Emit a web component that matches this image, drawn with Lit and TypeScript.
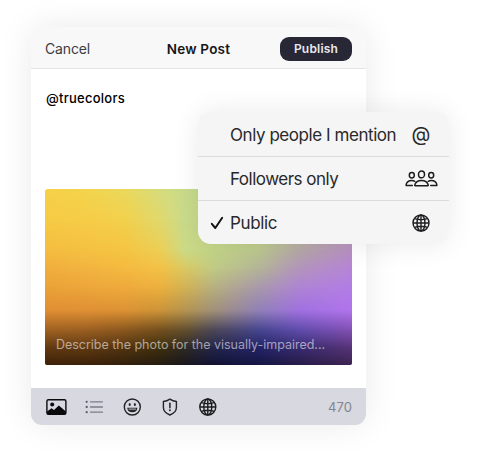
import { LitElement, html, css, svg } from "lit";
import { customElement } from "lit/decorators.js";
import { styleMap } from "lit/directives/style-map.js";

// Colour mesh of the attached photo: column stops in %, then one colour row per height.
const COLS = [0, 13, 26, 37.5, 45.6, 55, 70, 83, 100];
const MESH: [number, string][] = [
  [0, "f6d148 f3d44c ebd95c d6dc7c c9dc8c c4d88a c0d68a c0d08c c0c890"],
  [18, "f6ca44 f6cc46 f2d04c e0d86c cadb8c c5d98a c2d488 bcc090 b8a8b0"],
  [35, "f4bc40 f5c042 f5c442 ecce54 ccda86 c4d688 bcc890 b6a8a8 b890c4"],
  [45, "f0ae3c f2b440 f4ba40 f3c146 dac962 c0ca86 b4b498 b294bc b684d8"],
  [56, "eaa238 eca63a eeaa3c ecb03e d2b254 b6b080 a898ac ae84d4 b27ce6"],
  [69, "e08e32 e09034 dc9234 cc9438 b49450 a09078 9080b8 a070e0 b074ec"],
  [80, "a06222 9c6022 8c581e 74501e 64502e 4c4858 484690 604cac 8450b4"],
  [90, "623a12 603a12 523412 40300e 2e2a24 24264c 242468 382c70 583478"],
  [100, "3e2208 3c220a 32200c 241c10 1a181e 121234 161644 281c48 3c2450"],
];

const ink = "#1d1d20";

const globe = svg`<g fill="none" stroke="${ink}" stroke-width="1.4">
  <circle cx="9" cy="9" r="8"/><ellipse cx="9" cy="9" rx="4" ry="8"/>
  <path d="M9 1v16M1 9h16M2.6 4.7q6.4 2.1 12.8 0M2.6 13.3q6.4-2.1 12.8 0"/></g>`;

const people = svg`<g fill="none" stroke="${ink}" stroke-width="1.5" stroke-linejoin="round" stroke-linecap="round">
  <ellipse cx="16.5" cy="4.4" rx="3" ry="3.4"/>
  <path d="M10.2 15.7q-.6 0-.4-.8c.7-2.7 3.3-4.4 6.7-4.4s6 1.7 6.7 4.4q.2.8-.4.8z"/>
  <ellipse cx="6.8" cy="5.2" rx="2.5" ry="2.7"/><ellipse cx="26.2" cy="5.2" rx="2.5" ry="2.7"/>
  <path d="M7.3 15.5H1.6q-.7 0-.5-.8c.5-2.3 2.7-4.1 5.7-4.1q1.7 0 3 .7M25.7 15.5h5.7q.7 0 .5-.8c-.5-2.3-2.7-4.1-5.7-4.1q-1.7 0-3 .7"/></g>`;

@customElement("photo-card")
export class PhotoCard extends LitElement {
  static styles = css`
    :host { display: grid; height: 176px; border-radius: 3px; overflow: hidden; }
    .band, .caption { grid-area: 1 / 1; }
    .caption {
      z-index: 1; align-self: end; padding: 0 0 10px 11px; line-height: 20px;
      font-size: 12.5px; letter-spacing: -0.02px; color: rgba(255, 255, 255, 0.56); white-space: nowrap;
    }
  `;
  render() {
    return html`${MESH.map(([y, row], i) => {
      const stops = row.split(" ").map((c, k) => `#${c} ${COLS[k]}%`).join(",");
      const mask = i ? `linear-gradient(transparent ${MESH[i - 1][0]}%, #000 ${y}%)` : "none";
      return html`<div class="band" style=${styleMap({ background: `linear-gradient(90deg,${stops})`, maskImage: mask })}></div>`;
    })}<div class="caption">Describe the photo for the visually-impaired...</div>`;
  }
}

@customElement("audience-menu")
export class AudienceMenu extends LitElement {
  static styles = css`
    :host {
      display: block; width: 251px; border-radius: 13px; overflow: hidden; background: #f5f5f5;
      box-shadow: 0 0 28px rgba(0, 0, 0, 0.085); color: #29292b; font-size: 17px;
    }
    .row { display: grid; grid-template-columns: 32px minmax(0, 1fr) 56px; align-items: center; height: 43px; border-bottom: 1px solid #dcdcdd; }
    .row:first-child { height: 44px; }
    .row:last-child { border-bottom: 0; height: 43px; }
    .check { justify-self: end; margin-right: 6px; }
    .icon { justify-self: center; }
    .at { font-size: 19.5px; line-height: 22px; }
    .label { white-space: nowrap; padding-top: 1px; }
    .l0 { letter-spacing: -0.44px; }
    .l1 { letter-spacing: -0.5px; }
    .l2 { letter-spacing: -0.35px; }
    svg { display: block; }
  `;
  render() {
    return html`
      <div class="row"><span></span><span class="label l0">Only people I mention</span><span class="icon at">@</span></div>
      <div class="row"><span></span><span class="label l1">Followers only</span>
        <svg class="icon" width="33" height="17" viewBox="0 0 33 17">${people}</svg></div>
      <div class="row">
        <svg class="check" width="14" height="14" viewBox="0 0 14 14"><path d="M1.8 7.8 5.3 12 12.2 1.8" fill="none" stroke="#151517" stroke-width="2" stroke-linecap="round" stroke-linejoin="round"/></svg>
        <span class="label l2">Public</span>
        <svg class="icon" width="18" height="18" viewBox="0 0 18 18">${globe}</svg></div>`;
  }
}

@customElement("app-root")
export class AppRoot extends LitElement {
  static styles = css`
    :host {
      display: block; position: relative; width: 480px; height: 460px; box-sizing: border-box; padding: 27px 0 0 31px;
      background: #fff; overflow: hidden; font-family: Inter, "Liberation Sans", sans-serif;
    }
    .card {
      display: flex; flex-direction: column; width: 335px; height: 398px; background: #fff;
      border-radius: 11px; overflow: hidden; box-shadow: 0 0 34px rgba(0, 0, 0, 0.085);
    }
    header {
      display: grid; grid-template-columns: 1fr auto 1fr; align-items: center; height: 39px; padding: 2px 14px 0;
      background: #f8f8f8; border-bottom: 1px solid #e6e6e6; font-size: 14px;
    }
    .cancel { color: #3d3d3f; letter-spacing: -0.15px; }
    .title { font-weight: 600; color: #161618; font-size: 13.5px; letter-spacing: 0.2px; }
    .publish {
      justify-self: end; width: 72px; height: 24px; border-radius: 9px; background: #282735; color: #e8e8ec;
      font-weight: 600; font-size: 12px; line-height: 24px; text-align: center; letter-spacing: 0.2px;
    }
    .body { flex: 1; padding: 18px 14px 0; }
    .text { height: 102px; padding-left: 1px; font-size: 13px; line-height: 22px; font-weight: 500; color: #000; letter-spacing: 0.25px; }
    footer {
      display: flex; align-items: center; height: 37px; padding: 0 14px; background: #d7d8e0;
    }
    .tools { display: flex; align-items: center; flex: 1; }
    .tool { width: 38px; display: flex; }
    .count { color: #85858f; font-size: 13px; letter-spacing: 0.1px; }
    .menu { position: absolute; left: 198px; top: 112px; }
  `;
  render() {
    return html`
      <div class="card">
        <header><span class="cancel">Cancel</span><span class="title">New Post</span><span class="publish">Publish</span></header>
        <div class="body"><div class="text">@truecolors</div><photo-card></photo-card></div>
        <footer>
          <div class="tools">
            <span class="tool"><svg width="22" height="18" viewBox="0 0 22 18">
              <rect x="1.9" y="1.7" width="19" height="14.6" rx="1.6" fill="none" stroke="#0a0a0c" stroke-width="1.4"/>
              <circle cx="7.2" cy="6.6" r="2" fill="#0a0a0c"/>
              <path d="M2 16.3v-2.8l4.5-3.2 2.5 1.8 4.8-4.6 7.1 6v2.8z" fill="#0a0a0c"/></svg></span>
            <span class="tool"><svg width="22" height="18" viewBox="0 0 22 18"><g stroke="#7c7c86" stroke-width="1.3" stroke-linecap="round">
              <path d="M7.5 3.8h12M7.5 9h12M7.5 14.2h12"/></g>
              <g fill="#5f5f68"><circle cx="3.7" cy="3.8" r="1.15"/><circle cx="3.7" cy="9" r="1.15"/><circle cx="3.7" cy="14.2" r="1.15"/></g></svg></span>
            <span class="tool"><svg width="22" height="18" viewBox="0 0 22 18">
              <circle cx="11.3" cy="9" r="8" fill="none" stroke="#242428" stroke-width="1.4"/>
              <ellipse cx="8.7" cy="6.5" rx="1" ry="1.5" fill="#242428"/><ellipse cx="13.9" cy="6.5" rx="1" ry="1.5" fill="#242428"/>
              <path d="M6.2 9.7h10.2q-.5 4.6-5.1 4.6t-5.1-4.6z" fill="#242428"/>
              <path d="M7.7 11.1h7.2" stroke="#d7d8e0" stroke-width=".9"/></svg></span>
            <span class="tool"><svg width="22" height="18" viewBox="0 0 22 18">
              <path d="M10.9 1.2q3 2 6.5 2.3v6.1c0 3.5-2.5 5.9-6.5 7.4-4-1.500-6.500-3.900-6.500-7.400V3.500q3.500-.3 6.500-2.300z" fill="none" stroke="#242428" stroke-width="1.4" stroke-linejoin="round"/>
              <path d="M10.9 5.2v4.6" stroke="#242428" stroke-width="1.5" stroke-linecap="round"/><circle cx="10.9" cy="12.3" r=".95" fill="#242428"/></svg></span>
            <span class="tool"><svg width="22" height="18" viewBox="0 0 22 18"><g transform="translate(1.8 0)">${globe}</g></svg></span>
          </div>
          <span class="count">470</span>
        </footer>
      </div>
      <audience-menu class="menu"></audience-menu>`;
  }
}
